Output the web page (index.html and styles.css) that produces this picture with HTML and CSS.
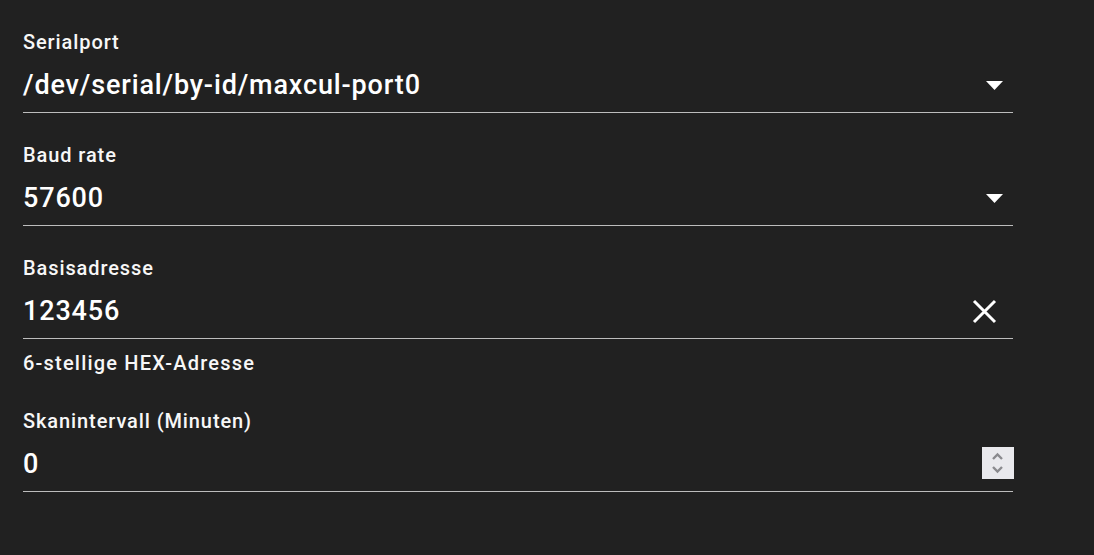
FILE: index.html
```html
<!DOCTYPE html>
<html lang="de">
<head>
<meta charset="utf-8">
<link rel="stylesheet" href="styles.css">
</head>
<body>
<div class="form">
  <div class="field">
    <div class="label">Serialport</div>
    <div class="row">
      <span class="value">/dev/serial/by-id/maxcul-port0</span>
      <span class="icon-drop"><svg width="17" height="9" viewBox="0 0 17 9"><polygon points="0,0 17,0 8.5,9" fill="#fff"/></svg></span>
    </div>
  </div>
  <div class="field">
    <div class="label">Baud rate</div>
    <div class="row">
      <span class="value">57600</span>
      <span class="icon-drop"><svg width="17" height="9" viewBox="0 0 17 9"><polygon points="0,0 17,0 8.5,9" fill="#fff"/></svg></span>
    </div>
  </div>
  <div class="field">
    <div class="label">Basisadresse</div>
    <div class="row">
      <span class="value">123456</span>
      <span class="icon-clear"><svg width="25" height="25" viewBox="0 0 25 25"><path d="M2 2L23 23M23 2L2 23" stroke="#fff" stroke-width="3" stroke-linecap="butt"/></svg></span>
    </div>
  </div>
  <div class="helper">6-stellige HEX-Adresse</div>
  <div class="field">
    <div class="label">Skanintervall (Minuten)</div>
    <div class="row">
      <span class="value">0</span>
      <span class="spinner"><svg width="32" height="32" viewBox="0 0 32 32"><path d="M11 12L15.5 7.5L20 12" fill="none" stroke="#8a8a8e" stroke-width="2.4"/><path d="M11 20L15.5 24.5L20 20" fill="none" stroke="#8a8a8e" stroke-width="2.4"/></svg></span>
    </div>
  </div>
</div>
</body>
</html>
```

FILE: styles.css
```css
html, body {
  margin: 0;
  padding: 0;
  background: #212121;
  height: 100%;
}
body {
  font-family: Roboto, "Noto Sans", sans-serif;
  font-weight: 500;
  color: #fff;
}
.form {
  width: 990px;
  margin-left: 23px;
  display: flex;
  flex-direction: column;
}
.field {
  padding-top: 30px;
}
.label {
  font-size: 20px;
  letter-spacing: 0.9px;
  line-height: 24px;
  height: 24px;
  margin-bottom: 8px;
  color: #f7f7f7;
}
.row {
  height: 46px;
  display: flex;
  align-items: center;
  padding-bottom: 4px;
  border-bottom: 1px solid #bdbdbd;
}
.value {
  flex: 1;
  font-size: 27px;
  letter-spacing: 0.85px;
  line-height: 46px;
  color: #fff;
}
.icon-drop {
  width: 40px;
  display: flex;
  justify-content: center;
  margin-right: -1px;
}
.icon-drop svg, .icon-clear svg, .spinner svg { display: block; }
.icon-clear {
  margin-right: 16px;
  display: flex;
}
.spinner {
  width: 32px;
  height: 32px;
  background: #e9e9ed;
  margin-right: -1px;
  margin-top: -2px;
}
.helper {
  font-size: 20px;
  letter-spacing: 1.2px;
  line-height: 24px;
  height: 24px;
  margin-top: 12px;
  margin-bottom: 4px;
  color: #f7f7f7;
}
```
